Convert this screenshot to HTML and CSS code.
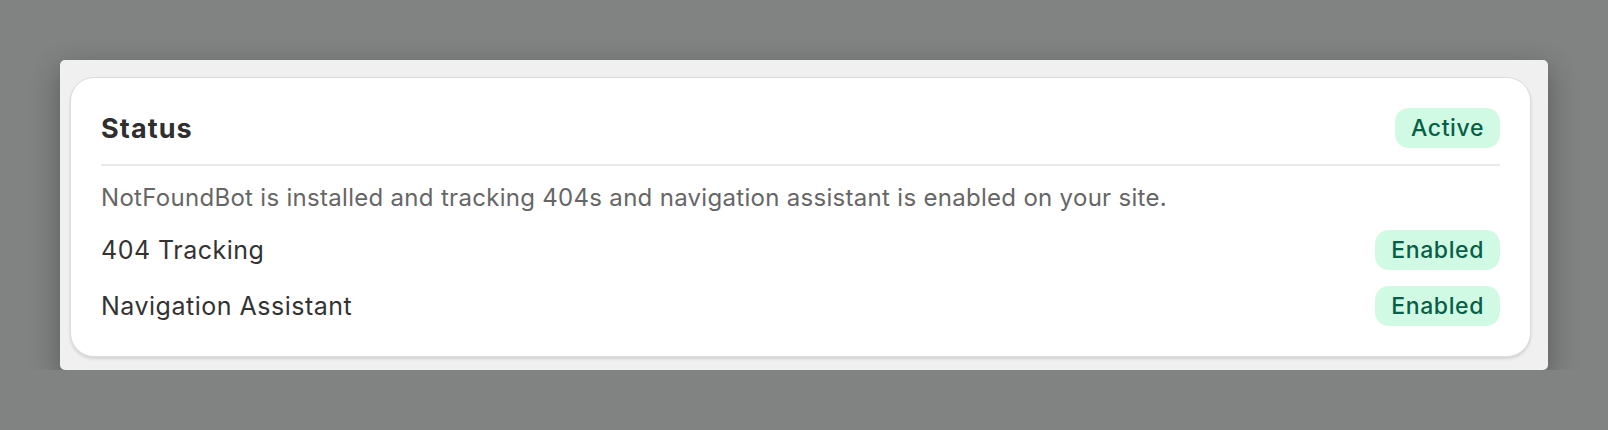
FILE: index.html
```html
<!DOCTYPE html>
<html lang="en">
<head>
    <meta charset="UTF-8">
    <title>NotFoundBot Status</title>
    <link rel="stylesheet" href="styles.css">
</head>
<body>
    <div class="panel">
        <section class="card">
            <div class="card-header">
                <h2>Status</h2>
                <span class="badge">Active</span>
            </div>
            <p class="desc">NotFoundBot is installed and tracking 404s and navigation assistant is enabled on your site.</p>
            <div class="row">
                <span class="label">404 Tracking</span>
                <span class="badge">Enabled</span>
            </div>
            <div class="row">
                <span class="label">Navigation Assistant</span>
                <span class="badge">Enabled</span>
            </div>
        </section>
    </div>
</body>
</html>
```

FILE: styles.css
```css
body {
    font-family: Inter, 'Noto Sans', sans-serif;
    background-color: #818282;
    margin: 0;
    padding: 60px 60px 0;
}

.panel {
    background-color: #f0f0f0;
    border-radius: 5px;
    padding: 17px 17px 13px 10px;
    box-shadow: 0 10px 30px rgba(0,0,0,0.32);
}

.card {
    background-color: white;
    border: 1px solid #dcdcdc;
    border-radius: 24px;
    padding: 30px;
    display: flex;
    flex-direction: column;
    gap: 16px;
    box-shadow: 0 2px 3px rgba(0,0,0,0.12);
}

.card-header {
    display: flex;
    justify-content: space-between;
    align-items: center;
    padding-bottom: 16px;
    border-bottom: 2px solid #e9e9e9;
}

.card-header h2 {
    margin: 0;
    font-size: 27px;
    font-weight: 700;
    letter-spacing: 1.1px;
    color: #2f2f2f;
}

.desc {
    margin: 0;
    font-size: 24px;
    line-height: 32px;
    letter-spacing: 0.3px;
    color: #666;
}

.row {
    display: flex;
    justify-content: space-between;
    align-items: center;
}

.label {
    font-size: 25px;
    letter-spacing: 0.5px;
    color: #333;
}

.badge {
    height: 40px;
    line-height: 40px;
    padding: 0 16px;
    border-radius: 14px;
    background-color: #d1fae5;
    color: #065f46;
    font-size: 23px;
    font-weight: 500;
    letter-spacing: 0.6px;
}
```
